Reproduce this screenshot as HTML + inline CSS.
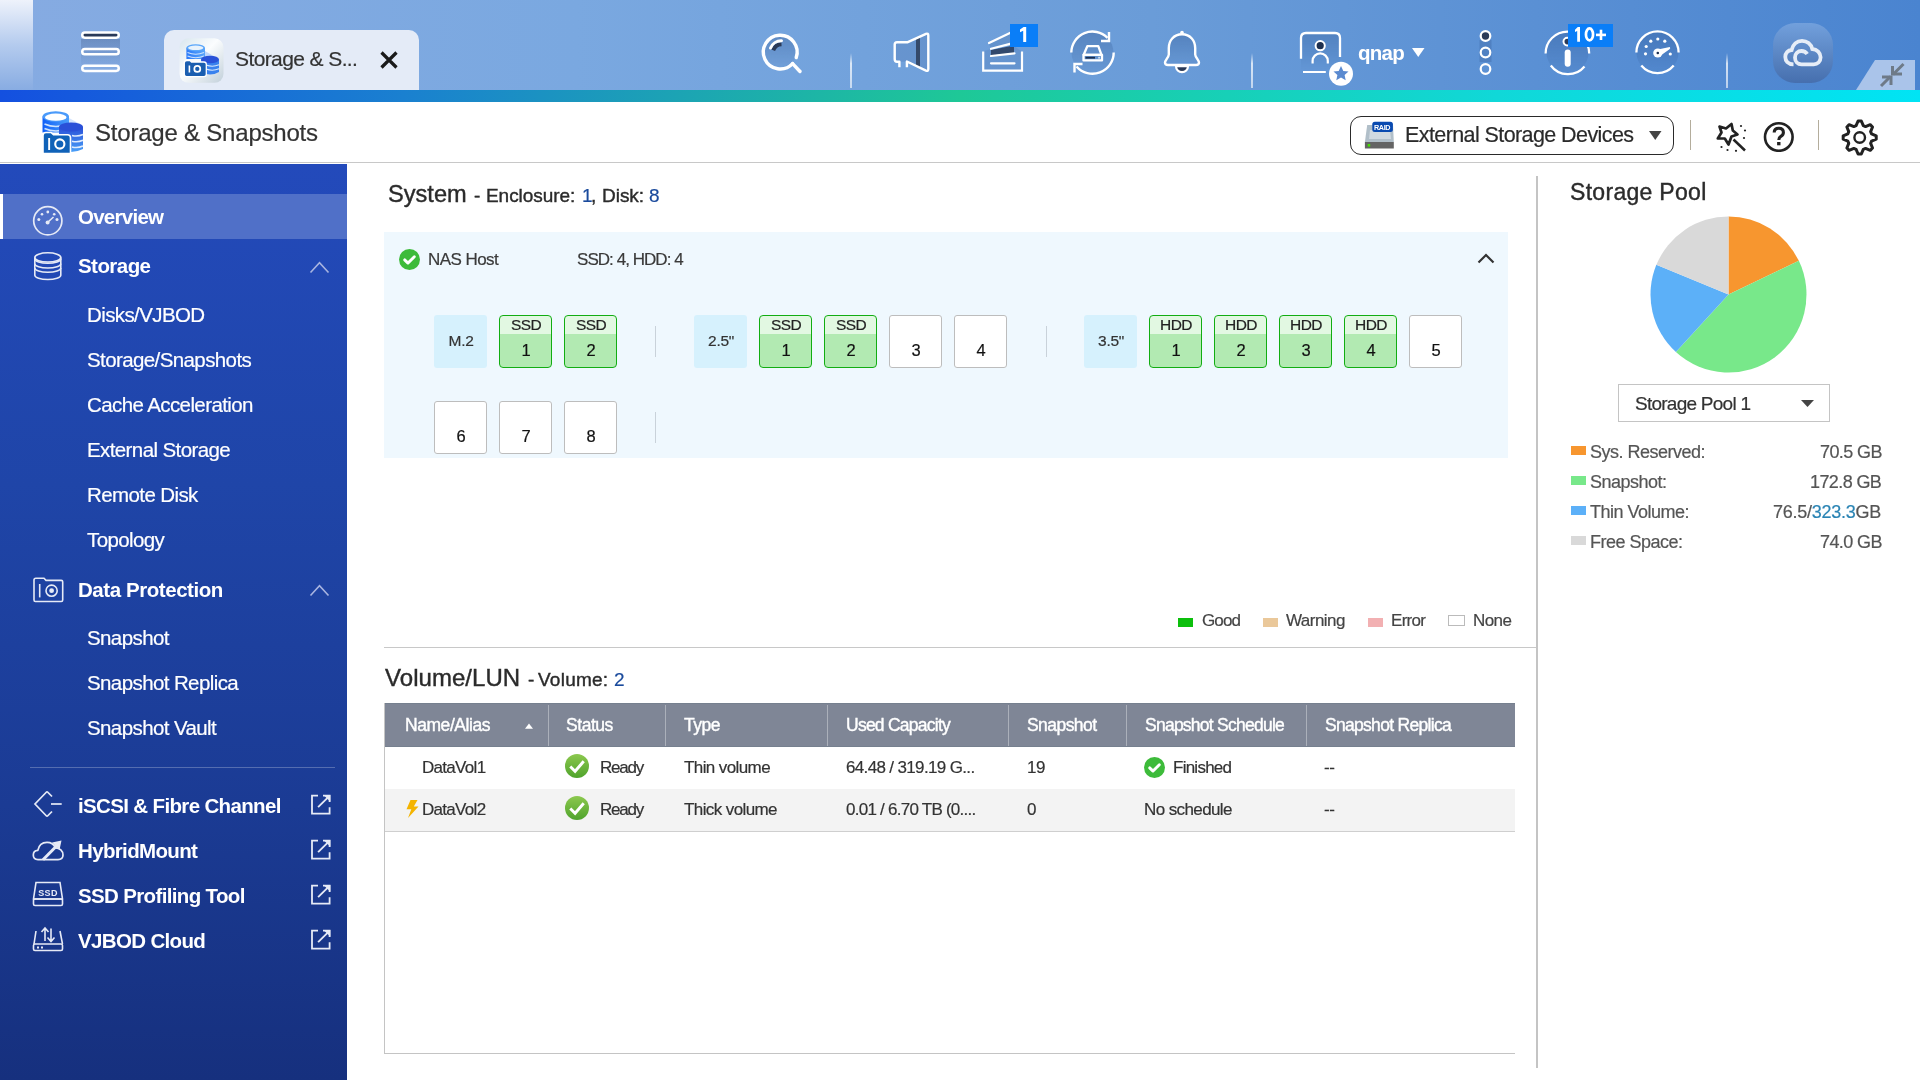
<!DOCTYPE html>
<html><head><meta charset="utf-8"><style>
html,body{margin:0;padding:0;width:1920px;height:1080px;overflow:hidden;background:#fff;font-family:"Liberation Sans",sans-serif;}
body{position:relative;}
body>div{will-change:transform;}
</style></head><body>
<div style="position:absolute;left:0px;top:0px;width:1920px;height:90px;background:linear-gradient(90deg,#86abe2 0%,#7aa8e0 30%,#6a9cd8 60%,#4a84d0 100%);"></div>
<div style="position:absolute;left:0px;top:0px;width:33px;height:90px;background:linear-gradient(180deg,#eef2fb 0%,#b4cbee 50%,#88ace2 100%);"></div>
<div style="position:absolute;left:0px;top:90px;width:1920px;height:12px;background:linear-gradient(90deg,#1450e0 0%,#1a80d0 21%,#1ec897 50%,#10d8d8 78%,#00e4f4 100%);"></div>
<div style="position:absolute;left:0px;top:102px;width:1920px;height:60px;background:#fff;"></div>
<div style="position:absolute;left:0px;top:162px;width:1920px;height:1px;background:#c8c8c8;"></div>
<div style="position:absolute;left:0px;top:164px;width:347px;height:916px;background:linear-gradient(180deg,#234abb 0%,#1f45a8 35%,#1b3b94 70%,#16307e 100%);"></div>
<div style="position:absolute;left:0px;top:194px;width:347px;height:45px;background:#5070c8;"></div>
<div style="position:absolute;left:0px;top:194px;width:3px;height:45px;background:#fff;"></div>
<div style="position:absolute;left:384px;top:232px;width:1124px;height:226px;background:#eff8fe;"></div>
<div style="position:absolute;left:384px;top:647px;width:1152px;height:1px;background:#c8c8c8;"></div>
<div style="position:absolute;left:1536px;top:176px;width:2px;height:892px;background:#c4c4c4;"></div>
<div style="position:absolute;left:164px;top:30px;width:255px;height:60px;background:#e4ebf7;border-radius:10px 10px 0 0;"></div>
<div style="position:absolute;left:235px;top:48.22px;font-size:21px;line-height:21px;color:#333;font-weight:400;letter-spacing:-0.6px;white-space:nowrap;-webkit-text-stroke:0.2px currentColor;">Storage &amp; S...</div>
<div style="position:absolute;left:95px;top:120.68px;font-size:24px;line-height:24px;color:#333;font-weight:400;letter-spacing:-0.21px;white-space:nowrap;-webkit-text-stroke:0.2px currentColor;">Storage &amp; Snapshots</div>
<div style="position:absolute;left:78px;top:206.65px;font-size:20.5px;line-height:20.5px;color:#ffffff;font-weight:700;letter-spacing:-0.74px;white-space:nowrap;">Overview</div>
<div style="position:absolute;left:78px;top:255.65px;font-size:20.5px;line-height:20.5px;color:#ffffff;font-weight:700;letter-spacing:-0.55px;white-space:nowrap;">Storage</div>
<div style="position:absolute;left:87px;top:305.15px;font-size:20.5px;line-height:20.5px;color:#ffffff;font-weight:400;letter-spacing:-0.6px;white-space:nowrap;-webkit-text-stroke:0.2px currentColor;">Disks/VJBOD</div>
<div style="position:absolute;left:87px;top:350.15px;font-size:20.5px;line-height:20.5px;color:#ffffff;font-weight:400;letter-spacing:-0.6px;white-space:nowrap;-webkit-text-stroke:0.2px currentColor;">Storage/Snapshots</div>
<div style="position:absolute;left:87px;top:395.15px;font-size:20.5px;line-height:20.5px;color:#ffffff;font-weight:400;letter-spacing:-0.6px;white-space:nowrap;-webkit-text-stroke:0.2px currentColor;">Cache Acceleration</div>
<div style="position:absolute;left:87px;top:440.15px;font-size:20.5px;line-height:20.5px;color:#ffffff;font-weight:400;letter-spacing:-0.6px;white-space:nowrap;-webkit-text-stroke:0.2px currentColor;">External Storage</div>
<div style="position:absolute;left:87px;top:485.15px;font-size:20.5px;line-height:20.5px;color:#ffffff;font-weight:400;letter-spacing:-0.6px;white-space:nowrap;-webkit-text-stroke:0.2px currentColor;">Remote Disk</div>
<div style="position:absolute;left:87px;top:530.15px;font-size:20.5px;line-height:20.5px;color:#ffffff;font-weight:400;letter-spacing:-0.6px;white-space:nowrap;-webkit-text-stroke:0.2px currentColor;">Topology</div>
<div style="position:absolute;left:78px;top:579.65px;font-size:20.5px;line-height:20.5px;color:#ffffff;font-weight:700;letter-spacing:-0.44px;white-space:nowrap;">Data Protection</div>
<div style="position:absolute;left:87px;top:628.25px;font-size:20.5px;line-height:20.5px;color:#ffffff;font-weight:400;letter-spacing:-0.6px;white-space:nowrap;-webkit-text-stroke:0.2px currentColor;">Snapshot</div>
<div style="position:absolute;left:87px;top:673.25px;font-size:20.5px;line-height:20.5px;color:#ffffff;font-weight:400;letter-spacing:-0.6px;white-space:nowrap;-webkit-text-stroke:0.2px currentColor;">Snapshot Replica</div>
<div style="position:absolute;left:87px;top:718.25px;font-size:20.5px;line-height:20.5px;color:#ffffff;font-weight:400;letter-spacing:-0.6px;white-space:nowrap;-webkit-text-stroke:0.2px currentColor;">Snapshot Vault</div>
<div style="position:absolute;left:30px;top:767px;width:305px;height:1px;background:rgba(255,255,255,0.25);"></div>
<div style="position:absolute;left:78px;top:795.65px;font-size:20.5px;line-height:20.5px;color:#ffffff;font-weight:700;letter-spacing:-0.65px;white-space:nowrap;">iSCSI &amp; Fibre Channel</div>
<div style="position:absolute;left:78px;top:840.65px;font-size:20.5px;line-height:20.5px;color:#ffffff;font-weight:700;letter-spacing:-0.65px;white-space:nowrap;">HybridMount</div>
<div style="position:absolute;left:78px;top:885.65px;font-size:20.5px;line-height:20.5px;color:#ffffff;font-weight:700;letter-spacing:-0.65px;white-space:nowrap;">SSD Profiling Tool</div>
<div style="position:absolute;left:78px;top:930.65px;font-size:20.5px;line-height:20.5px;color:#ffffff;font-weight:700;letter-spacing:-0.65px;white-space:nowrap;">VJBOD Cloud</div>
<div style="position:absolute;left:387.5px;top:183.22px;font-size:23.6px;line-height:23.6px;color:#2b2b2b;font-weight:400;letter-spacing:0px;white-space:nowrap;-webkit-text-stroke:0.4px currentColor;">System</div>
<div style="position:absolute;left:473.5px;top:186.22px;font-size:19px;line-height:19px;color:#2b2b2b;font-weight:400;letter-spacing:0px;white-space:nowrap;-webkit-text-stroke:0.4px currentColor;">-</div>
<div style="position:absolute;left:486px;top:186.22px;font-size:19px;line-height:19px;color:#2b2b2b;font-weight:400;letter-spacing:-0.05px;white-space:nowrap;-webkit-text-stroke:0.4px currentColor;">Enclosure:</div>
<div style="position:absolute;left:581.5px;top:186.22px;font-size:19px;line-height:19px;color:#1a4a9c;font-weight:400;letter-spacing:0px;white-space:nowrap;-webkit-text-stroke:0.2px currentColor;">1</div>
<div style="position:absolute;left:590.5px;top:186.22px;font-size:19px;line-height:19px;color:#2b2b2b;font-weight:400;letter-spacing:0px;white-space:nowrap;-webkit-text-stroke:0.4px currentColor;">,</div>
<div style="position:absolute;left:602px;top:186.22px;font-size:19px;line-height:19px;color:#2b2b2b;font-weight:400;letter-spacing:-0.03px;white-space:nowrap;-webkit-text-stroke:0.4px currentColor;">Disk:</div>
<div style="position:absolute;left:648.5px;top:186.22px;font-size:19px;line-height:19px;color:#1a4a9c;font-weight:400;letter-spacing:0px;white-space:nowrap;-webkit-text-stroke:0.2px currentColor;">8</div>
<div style="position:absolute;left:428px;top:250.91px;font-size:17px;line-height:17px;color:#3a3a3a;font-weight:400;letter-spacing:-0.55px;white-space:nowrap;-webkit-text-stroke:0.2px currentColor;">NAS Host</div>
<div style="position:absolute;left:576.6px;top:250.91px;font-size:17px;line-height:17px;color:#3a3a3a;font-weight:400;letter-spacing:-0.95px;white-space:nowrap;-webkit-text-stroke:0.2px currentColor;">SSD: 4, HDD: 4</div>
<div style="position:absolute;left:1178px;top:618px;width:15px;height:9px;background:#0cbf0c;"></div>
<div style="position:absolute;left:1201.5px;top:612.11px;font-size:17px;line-height:17px;color:#444;font-weight:400;letter-spacing:-0.9px;white-space:nowrap;-webkit-text-stroke:0.2px currentColor;">Good</div>
<div style="position:absolute;left:1263px;top:618px;width:15px;height:9px;background:#eac89a;"></div>
<div style="position:absolute;left:1285.8px;top:612.11px;font-size:17px;line-height:17px;color:#444;font-weight:400;letter-spacing:-0.55px;white-space:nowrap;-webkit-text-stroke:0.2px currentColor;">Warning</div>
<div style="position:absolute;left:1368px;top:618px;width:15px;height:9px;background:#f2b0b2;"></div>
<div style="position:absolute;left:1391px;top:612.11px;font-size:17px;line-height:17px;color:#444;font-weight:400;letter-spacing:-0.7px;white-space:nowrap;-webkit-text-stroke:0.2px currentColor;">Error</div>
<div style="position:absolute;left:1448px;top:615px;width:17px;height:11px;background:#fff;border:1px solid #bbb;box-sizing:border-box;"></div>
<div style="position:absolute;left:1473px;top:612.11px;font-size:17px;line-height:17px;color:#444;font-weight:400;letter-spacing:-0.6px;white-space:nowrap;-webkit-text-stroke:0.2px currentColor;">None</div>
<div style="position:absolute;left:384.7px;top:666.08px;font-size:24px;line-height:24px;color:#2b2b2b;font-weight:400;letter-spacing:0.05px;white-space:nowrap;-webkit-text-stroke:0.4px currentColor;">Volume/LUN</div>
<div style="position:absolute;left:527.5px;top:669.62px;font-size:19px;line-height:19px;color:#2b2b2b;font-weight:400;letter-spacing:0px;white-space:nowrap;-webkit-text-stroke:0.4px currentColor;">-</div>
<div style="position:absolute;left:538.4px;top:669.62px;font-size:19px;line-height:19px;color:#2b2b2b;font-weight:400;letter-spacing:0.25px;white-space:nowrap;-webkit-text-stroke:0.4px currentColor;">Volume:</div>
<div style="position:absolute;left:614px;top:669.62px;font-size:19px;line-height:19px;color:#1a4a9c;font-weight:400;letter-spacing:0px;white-space:nowrap;-webkit-text-stroke:0.2px currentColor;">2</div>
<div style="position:absolute;left:385px;top:703px;width:1130px;height:44px;background:#7f8696;border-top:1px solid #76808f;border-bottom:1px solid #76808f;box-sizing:border-box;"></div>
<div style="position:absolute;left:548px;top:705px;width:1px;height:41px;background:rgba(255,255,255,0.35);"></div>
<div style="position:absolute;left:665px;top:705px;width:1px;height:41px;background:rgba(255,255,255,0.35);"></div>
<div style="position:absolute;left:827px;top:705px;width:1px;height:41px;background:rgba(255,255,255,0.35);"></div>
<div style="position:absolute;left:1008px;top:705px;width:1px;height:41px;background:rgba(255,255,255,0.35);"></div>
<div style="position:absolute;left:1126px;top:705px;width:1px;height:41px;background:rgba(255,255,255,0.35);"></div>
<div style="position:absolute;left:1306px;top:705px;width:1px;height:41px;background:rgba(255,255,255,0.35);"></div>
<div style="position:absolute;left:404.5px;top:717.19px;font-size:17.5px;line-height:17.5px;color:#ffffff;font-weight:400;letter-spacing:-0.45px;white-space:nowrap;-webkit-text-stroke:0.4px currentColor;">Name/Alias</div>
<svg style="position:absolute;left:524px;top:722px;" width="10" height="8" viewBox="0 0 10 8"><path d="M1 6.8 L5 1.5 L9 6.8 Z" fill="#fff"/></svg>
<div style="position:absolute;left:566.2px;top:717.19px;font-size:17.5px;line-height:17.5px;color:#ffffff;font-weight:400;letter-spacing:-0.45px;white-space:nowrap;-webkit-text-stroke:0.4px currentColor;">Status</div>
<div style="position:absolute;left:684.3px;top:717.19px;font-size:17.5px;line-height:17.5px;color:#ffffff;font-weight:400;letter-spacing:-0.45px;white-space:nowrap;-webkit-text-stroke:0.4px currentColor;">Type</div>
<div style="position:absolute;left:846.4px;top:717.19px;font-size:17.5px;line-height:17.5px;color:#ffffff;font-weight:400;letter-spacing:-0.75px;white-space:nowrap;-webkit-text-stroke:0.4px currentColor;">Used Capacity</div>
<div style="position:absolute;left:1026.7px;top:717.19px;font-size:17.5px;line-height:17.5px;color:#ffffff;font-weight:400;letter-spacing:-0.55px;white-space:nowrap;-webkit-text-stroke:0.4px currentColor;">Snapshot</div>
<div style="position:absolute;left:1144.7px;top:717.19px;font-size:17.5px;line-height:17.5px;color:#ffffff;font-weight:400;letter-spacing:-0.75px;white-space:nowrap;-webkit-text-stroke:0.4px currentColor;">Snapshot Schedule</div>
<div style="position:absolute;left:1324.7px;top:717.19px;font-size:17.5px;line-height:17.5px;color:#ffffff;font-weight:400;letter-spacing:-0.7px;white-space:nowrap;-webkit-text-stroke:0.4px currentColor;">Snapshot Replica</div>
<div style="position:absolute;left:384px;top:747px;width:1131px;height:42px;background:#fff;"></div>
<div style="position:absolute;left:384px;top:789px;width:1131px;height:42px;background:#f3f3f3;"></div>
<div style="position:absolute;left:384px;top:831px;width:1131px;height:1px;background:#cfcfcf;"></div>
<div style="position:absolute;left:384px;top:703px;width:1px;height:350px;background:#c4c4c4;"></div>
<div style="position:absolute;left:384px;top:1053px;width:1131px;height:1px;background:#c4c4c4;"></div>
<div style="position:absolute;left:421.5px;top:758.51px;font-size:17px;line-height:17px;color:#333;font-weight:400;letter-spacing:-0.7px;white-space:nowrap;-webkit-text-stroke:0.2px currentColor;">DataVol1</div>
<div style="position:absolute;left:600.3px;top:758.51px;font-size:17px;line-height:17px;color:#333;font-weight:400;letter-spacing:-1.2px;white-space:nowrap;-webkit-text-stroke:0.2px currentColor;">Ready</div>
<div style="position:absolute;left:684px;top:758.51px;font-size:17px;line-height:17px;color:#333;font-weight:400;letter-spacing:-0.6px;white-space:nowrap;-webkit-text-stroke:0.2px currentColor;">Thin volume</div>
<div style="position:absolute;left:846px;top:758.51px;font-size:17px;line-height:17px;color:#333;font-weight:400;letter-spacing:-0.65px;white-space:nowrap;-webkit-text-stroke:0.2px currentColor;">64.48 / 319.19 G...</div>
<div style="position:absolute;left:1026.7px;top:758.51px;font-size:17px;line-height:17px;color:#333;font-weight:400;letter-spacing:-0.5px;white-space:nowrap;-webkit-text-stroke:0.2px currentColor;">19</div>
<div style="position:absolute;left:1172.8px;top:758.51px;font-size:17px;line-height:17px;color:#333;font-weight:400;letter-spacing:-0.75px;white-space:nowrap;-webkit-text-stroke:0.2px currentColor;">Finished</div>
<div style="position:absolute;left:1324.4px;top:758.51px;font-size:17px;line-height:17px;color:#333;font-weight:400;letter-spacing:-0.5px;white-space:nowrap;-webkit-text-stroke:0.2px currentColor;">--</div>
<div style="position:absolute;left:421.5px;top:800.51px;font-size:17px;line-height:17px;color:#333;font-weight:400;letter-spacing:-0.7px;white-space:nowrap;-webkit-text-stroke:0.2px currentColor;">DataVol2</div>
<div style="position:absolute;left:600.3px;top:800.51px;font-size:17px;line-height:17px;color:#333;font-weight:400;letter-spacing:-1.2px;white-space:nowrap;-webkit-text-stroke:0.2px currentColor;">Ready</div>
<div style="position:absolute;left:684px;top:800.51px;font-size:17px;line-height:17px;color:#333;font-weight:400;letter-spacing:-0.6px;white-space:nowrap;-webkit-text-stroke:0.2px currentColor;">Thick volume</div>
<div style="position:absolute;left:846px;top:800.51px;font-size:17px;line-height:17px;color:#333;font-weight:400;letter-spacing:-0.75px;white-space:nowrap;-webkit-text-stroke:0.2px currentColor;">0.01 / 6.70 TB (0....</div>
<div style="position:absolute;left:1026.7px;top:800.51px;font-size:17px;line-height:17px;color:#333;font-weight:400;letter-spacing:-0.5px;white-space:nowrap;-webkit-text-stroke:0.2px currentColor;">0</div>
<div style="position:absolute;left:1144px;top:800.51px;font-size:17px;line-height:17px;color:#333;font-weight:400;letter-spacing:-0.6px;white-space:nowrap;-webkit-text-stroke:0.2px currentColor;">No schedule</div>
<div style="position:absolute;left:1324.4px;top:800.51px;font-size:17px;line-height:17px;color:#333;font-weight:400;letter-spacing:-0.5px;white-space:nowrap;-webkit-text-stroke:0.2px currentColor;">--</div>
<div style="position:absolute;left:1569.6px;top:181.13px;font-size:23px;line-height:23px;color:#2b2b2b;font-weight:400;letter-spacing:0.3px;white-space:nowrap;-webkit-text-stroke:0.4px currentColor;">Storage Pool</div>
<div style="position:absolute;left:1618px;top:384px;width:212px;height:38px;border:1px solid #c4c4c4;box-sizing:border-box;background:#fff;"></div>
<div style="position:absolute;left:1635px;top:393.52px;font-size:19px;line-height:19px;color:#333;font-weight:400;letter-spacing:-0.75px;white-space:nowrap;-webkit-text-stroke:0.2px currentColor;">Storage Pool 1</div>
<svg style="position:absolute;left:1801px;top:400px;" width="13" height="7" viewBox="0 0 13 7"><path d="M0 0 L13 0 L6.5 7 Z" fill="#444"/></svg>
<div style="position:absolute;left:1571px;top:446px;width:15px;height:9px;background:#f7962f;"></div>
<div style="position:absolute;left:1590px;top:442.76px;font-size:18px;line-height:18px;color:#555;font-weight:400;letter-spacing:-0.5px;white-space:nowrap;-webkit-text-stroke:0.2px currentColor;">Sys. Reserved:</div>
<div style="position:absolute;right:38.5px;top:442.76px;font-size:18px;line-height:18px;color:#555;font-weight:400;letter-spacing:-0.6px;white-space:nowrap;-webkit-text-stroke:0.2px currentColor;">70.5 GB</div>
<div style="position:absolute;left:1571px;top:476px;width:15px;height:9px;background:#78e88a;"></div>
<div style="position:absolute;left:1590px;top:472.76px;font-size:18px;line-height:18px;color:#555;font-weight:400;letter-spacing:-0.5px;white-space:nowrap;-webkit-text-stroke:0.2px currentColor;">Snapshot:</div>
<div style="position:absolute;right:38.5px;top:472.76px;font-size:18px;line-height:18px;color:#555;font-weight:400;letter-spacing:-0.6px;white-space:nowrap;-webkit-text-stroke:0.2px currentColor;">172.8 GB</div>
<div style="position:absolute;left:1571px;top:506px;width:15px;height:9px;background:#5cb0f8;"></div>
<div style="position:absolute;left:1590px;top:502.76px;font-size:18px;line-height:18px;color:#555;font-weight:400;letter-spacing:-0.5px;white-space:nowrap;-webkit-text-stroke:0.2px currentColor;">Thin Volume:</div>
<div style="position:absolute;right:38.5px;top:502.76px;font-size:18px;line-height:18px;color:#555;font-weight:400;letter-spacing:-0.25px;white-space:nowrap;-webkit-text-stroke:0.2px currentColor;">76.5/<span style="color:#2a84b4">323.3</span>GB</div>
<div style="position:absolute;left:1571px;top:536px;width:15px;height:9px;background:#d9d9d9;"></div>
<div style="position:absolute;left:1590px;top:532.76px;font-size:18px;line-height:18px;color:#555;font-weight:400;letter-spacing:-0.5px;white-space:nowrap;-webkit-text-stroke:0.2px currentColor;">Free Space:</div>
<div style="position:absolute;right:38.5px;top:532.76px;font-size:18px;line-height:18px;color:#555;font-weight:400;letter-spacing:-0.6px;white-space:nowrap;-webkit-text-stroke:0.2px currentColor;">74.0 GB</div>
<div style="position:absolute;left:434px;top:315px;width:53px;height:53px;background:#d6f1fd;border-radius:3px;"></div>
<div style="position:absolute;left:-39.5px;width:1000px;text-align:center;top:332.88px;font-size:15.5px;line-height:15.5px;color:#333;font-weight:400;letter-spacing:-0.3px;white-space:nowrap;-webkit-text-stroke:0.2px currentColor;">M.2</div>
<div style="position:absolute;left:499px;top:315px;width:53px;height:53px;box-sizing:border-box;border:1.8px solid #12ad12;border-radius:4px;background:linear-gradient(180deg,#e2f8e2 0,#e2f8e2 18px,#b2eab2 18px);"></div>
<div style="position:absolute;left:25.5px;width:1000px;text-align:center;top:317.48px;font-size:15.5px;line-height:15.5px;color:#222;font-weight:400;letter-spacing:-0.6px;white-space:nowrap;-webkit-text-stroke:0.2px currentColor;">SSD</div>
<div style="position:absolute;left:25.5px;width:1000px;text-align:center;top:341.73px;font-size:16.5px;line-height:16.5px;color:#111;font-weight:400;letter-spacing:0px;white-space:nowrap;-webkit-text-stroke:0.2px currentColor;">1</div>
<div style="position:absolute;left:564px;top:315px;width:53px;height:53px;box-sizing:border-box;border:1.8px solid #12ad12;border-radius:4px;background:linear-gradient(180deg,#e2f8e2 0,#e2f8e2 18px,#b2eab2 18px);"></div>
<div style="position:absolute;left:90.5px;width:1000px;text-align:center;top:317.48px;font-size:15.5px;line-height:15.5px;color:#222;font-weight:400;letter-spacing:-0.6px;white-space:nowrap;-webkit-text-stroke:0.2px currentColor;">SSD</div>
<div style="position:absolute;left:90.5px;width:1000px;text-align:center;top:341.73px;font-size:16.5px;line-height:16.5px;color:#111;font-weight:400;letter-spacing:0px;white-space:nowrap;-webkit-text-stroke:0.2px currentColor;">2</div>
<div style="position:absolute;left:655px;top:326px;width:1px;height:31px;background:#c9d2da;"></div>
<div style="position:absolute;left:694px;top:315px;width:53px;height:53px;background:#d6f1fd;border-radius:3px;"></div>
<div style="position:absolute;left:220.5px;width:1000px;text-align:center;top:332.88px;font-size:15.5px;line-height:15.5px;color:#333;font-weight:400;letter-spacing:-0.3px;white-space:nowrap;-webkit-text-stroke:0.2px currentColor;">2.5"</div>
<div style="position:absolute;left:759px;top:315px;width:53px;height:53px;box-sizing:border-box;border:1.8px solid #12ad12;border-radius:4px;background:linear-gradient(180deg,#e2f8e2 0,#e2f8e2 18px,#b2eab2 18px);"></div>
<div style="position:absolute;left:285.5px;width:1000px;text-align:center;top:317.48px;font-size:15.5px;line-height:15.5px;color:#222;font-weight:400;letter-spacing:-0.6px;white-space:nowrap;-webkit-text-stroke:0.2px currentColor;">SSD</div>
<div style="position:absolute;left:285.5px;width:1000px;text-align:center;top:341.73px;font-size:16.5px;line-height:16.5px;color:#111;font-weight:400;letter-spacing:0px;white-space:nowrap;-webkit-text-stroke:0.2px currentColor;">1</div>
<div style="position:absolute;left:824px;top:315px;width:53px;height:53px;box-sizing:border-box;border:1.8px solid #12ad12;border-radius:4px;background:linear-gradient(180deg,#e2f8e2 0,#e2f8e2 18px,#b2eab2 18px);"></div>
<div style="position:absolute;left:350.5px;width:1000px;text-align:center;top:317.48px;font-size:15.5px;line-height:15.5px;color:#222;font-weight:400;letter-spacing:-0.6px;white-space:nowrap;-webkit-text-stroke:0.2px currentColor;">SSD</div>
<div style="position:absolute;left:350.5px;width:1000px;text-align:center;top:341.73px;font-size:16.5px;line-height:16.5px;color:#111;font-weight:400;letter-spacing:0px;white-space:nowrap;-webkit-text-stroke:0.2px currentColor;">2</div>
<div style="position:absolute;left:889px;top:315px;width:53px;height:53px;box-sizing:border-box;border:1px solid #bdbdbd;border-radius:3px;background:#fff;"></div>
<div style="position:absolute;left:415.5px;width:1000px;text-align:center;top:341.73px;font-size:16.5px;line-height:16.5px;color:#111;font-weight:400;letter-spacing:0px;white-space:nowrap;-webkit-text-stroke:0.2px currentColor;">3</div>
<div style="position:absolute;left:954px;top:315px;width:53px;height:53px;box-sizing:border-box;border:1px solid #bdbdbd;border-radius:3px;background:#fff;"></div>
<div style="position:absolute;left:480.5px;width:1000px;text-align:center;top:341.73px;font-size:16.5px;line-height:16.5px;color:#111;font-weight:400;letter-spacing:0px;white-space:nowrap;-webkit-text-stroke:0.2px currentColor;">4</div>
<div style="position:absolute;left:1046px;top:326px;width:1px;height:31px;background:#c9d2da;"></div>
<div style="position:absolute;left:1084px;top:315px;width:53px;height:53px;background:#d6f1fd;border-radius:3px;"></div>
<div style="position:absolute;left:610.5px;width:1000px;text-align:center;top:332.88px;font-size:15.5px;line-height:15.5px;color:#333;font-weight:400;letter-spacing:-0.3px;white-space:nowrap;-webkit-text-stroke:0.2px currentColor;">3.5"</div>
<div style="position:absolute;left:1149px;top:315px;width:53px;height:53px;box-sizing:border-box;border:1.8px solid #12ad12;border-radius:4px;background:linear-gradient(180deg,#e2f8e2 0,#e2f8e2 18px,#b2eab2 18px);"></div>
<div style="position:absolute;left:675.5px;width:1000px;text-align:center;top:317.48px;font-size:15.5px;line-height:15.5px;color:#222;font-weight:400;letter-spacing:-0.6px;white-space:nowrap;-webkit-text-stroke:0.2px currentColor;">HDD</div>
<div style="position:absolute;left:675.5px;width:1000px;text-align:center;top:341.73px;font-size:16.5px;line-height:16.5px;color:#111;font-weight:400;letter-spacing:0px;white-space:nowrap;-webkit-text-stroke:0.2px currentColor;">1</div>
<div style="position:absolute;left:1214px;top:315px;width:53px;height:53px;box-sizing:border-box;border:1.8px solid #12ad12;border-radius:4px;background:linear-gradient(180deg,#e2f8e2 0,#e2f8e2 18px,#b2eab2 18px);"></div>
<div style="position:absolute;left:740.5px;width:1000px;text-align:center;top:317.48px;font-size:15.5px;line-height:15.5px;color:#222;font-weight:400;letter-spacing:-0.6px;white-space:nowrap;-webkit-text-stroke:0.2px currentColor;">HDD</div>
<div style="position:absolute;left:740.5px;width:1000px;text-align:center;top:341.73px;font-size:16.5px;line-height:16.5px;color:#111;font-weight:400;letter-spacing:0px;white-space:nowrap;-webkit-text-stroke:0.2px currentColor;">2</div>
<div style="position:absolute;left:1279px;top:315px;width:53px;height:53px;box-sizing:border-box;border:1.8px solid #12ad12;border-radius:4px;background:linear-gradient(180deg,#e2f8e2 0,#e2f8e2 18px,#b2eab2 18px);"></div>
<div style="position:absolute;left:805.5px;width:1000px;text-align:center;top:317.48px;font-size:15.5px;line-height:15.5px;color:#222;font-weight:400;letter-spacing:-0.6px;white-space:nowrap;-webkit-text-stroke:0.2px currentColor;">HDD</div>
<div style="position:absolute;left:805.5px;width:1000px;text-align:center;top:341.73px;font-size:16.5px;line-height:16.5px;color:#111;font-weight:400;letter-spacing:0px;white-space:nowrap;-webkit-text-stroke:0.2px currentColor;">3</div>
<div style="position:absolute;left:1344px;top:315px;width:53px;height:53px;box-sizing:border-box;border:1.8px solid #12ad12;border-radius:4px;background:linear-gradient(180deg,#e2f8e2 0,#e2f8e2 18px,#b2eab2 18px);"></div>
<div style="position:absolute;left:870.5px;width:1000px;text-align:center;top:317.48px;font-size:15.5px;line-height:15.5px;color:#222;font-weight:400;letter-spacing:-0.6px;white-space:nowrap;-webkit-text-stroke:0.2px currentColor;">HDD</div>
<div style="position:absolute;left:870.5px;width:1000px;text-align:center;top:341.73px;font-size:16.5px;line-height:16.5px;color:#111;font-weight:400;letter-spacing:0px;white-space:nowrap;-webkit-text-stroke:0.2px currentColor;">4</div>
<div style="position:absolute;left:1409px;top:315px;width:53px;height:53px;box-sizing:border-box;border:1px solid #bdbdbd;border-radius:3px;background:#fff;"></div>
<div style="position:absolute;left:935.5px;width:1000px;text-align:center;top:341.73px;font-size:16.5px;line-height:16.5px;color:#111;font-weight:400;letter-spacing:0px;white-space:nowrap;-webkit-text-stroke:0.2px currentColor;">5</div>
<div style="position:absolute;left:434px;top:401px;width:53px;height:53px;box-sizing:border-box;border:1px solid #bdbdbd;border-radius:3px;background:#fff;"></div>
<div style="position:absolute;left:-39.5px;width:1000px;text-align:center;top:427.73px;font-size:16.5px;line-height:16.5px;color:#111;font-weight:400;letter-spacing:0px;white-space:nowrap;-webkit-text-stroke:0.2px currentColor;">6</div>
<div style="position:absolute;left:499px;top:401px;width:53px;height:53px;box-sizing:border-box;border:1px solid #bdbdbd;border-radius:3px;background:#fff;"></div>
<div style="position:absolute;left:25.5px;width:1000px;text-align:center;top:427.73px;font-size:16.5px;line-height:16.5px;color:#111;font-weight:400;letter-spacing:0px;white-space:nowrap;-webkit-text-stroke:0.2px currentColor;">7</div>
<div style="position:absolute;left:564px;top:401px;width:53px;height:53px;box-sizing:border-box;border:1px solid #bdbdbd;border-radius:3px;background:#fff;"></div>
<div style="position:absolute;left:90.5px;width:1000px;text-align:center;top:427.73px;font-size:16.5px;line-height:16.5px;color:#111;font-weight:400;letter-spacing:0px;white-space:nowrap;-webkit-text-stroke:0.2px currentColor;">8</div>
<div style="position:absolute;left:655px;top:412px;width:1px;height:31px;background:#c9d2da;"></div>
<svg style="position:absolute;left:1650px;top:216px;" width="157" height="157" viewBox="0 0 157 157"><path d="M78.5 78.5 L78.50 0.50 A78 78 0 0 1 148.87 44.86 Z" fill="#f7962f"/><path d="M78.5 78.5 L148.87 44.86 A78 78 0 0 1 25.89 136.08 Z" fill="#78e88a"/><path d="M78.5 78.5 L25.89 136.08 A78 78 0 0 1 6.36 48.84 Z" fill="#5cb0f8"/><path d="M78.5 78.5 L6.36 48.84 A78 78 0 0 1 78.50 0.50 Z" fill="#d9d9d9"/></svg>
<svg style="position:absolute;left:78px;top:28px;" width="46" height="48" viewBox="0 0 46 48">
<defs><linearGradient id="hg" x1="0" y1="0" x2="0" y2="1"><stop offset="0" stop-color="#1a2a50" stop-opacity="0.22"/><stop offset="1" stop-color="#1a2a50" stop-opacity="0.03"/></linearGradient></defs>
<rect x="3" y="11" width="39" height="25" fill="url(#hg)"/>
<rect x="4.25" y="4.5" width="36.5" height="5.2" rx="2.6" fill="#2a3a58" stroke="#fff" stroke-width="2.5"/>
<rect x="4.25" y="21.1" width="36.5" height="5.2" rx="2.6" fill="none" stroke="#fff" stroke-width="2.5"/>
<rect x="4.25" y="37.7" width="36.5" height="5.2" rx="2.6" fill="none" stroke="#fff" stroke-width="2.5"/>
</svg>
<div style="position:absolute;left:850px;top:53px;width:2px;height:35px;background:linear-gradient(180deg,rgba(255,255,255,0) 0%,rgba(255,255,255,0.75) 30%,rgba(255,255,255,0.6) 100%);"></div>
<div style="position:absolute;left:1251px;top:53px;width:2px;height:35px;background:linear-gradient(180deg,rgba(255,255,255,0) 0%,rgba(255,255,255,0.75) 30%,rgba(255,255,255,0.6) 100%);"></div>
<div style="position:absolute;left:1726px;top:53px;width:2px;height:35px;background:linear-gradient(180deg,rgba(255,255,255,0) 0%,rgba(255,255,255,0.75) 30%,rgba(255,255,255,0.6) 100%);"></div>
<svg style="position:absolute;left:755px;top:25px;" width="60" height="60" viewBox="0 0 60 60">
<defs><linearGradient id="gq" x1="0" y1="0" x2="0" y2="1"><stop offset="0" stop-color="#1e3f78" stop-opacity="0.26"/><stop offset="1" stop-color="#1e3f78" stop-opacity="0.04"/></linearGradient></defs><circle cx="25.5" cy="26.5" r="16" fill="url(#gq)"/>
<path d="M41.2 32.6 A16.9 16.9 0 1 0 37.6 38.6" fill="none" stroke="#fff" stroke-width="3.4" stroke-linecap="round"/>
<path d="M37.6 38.6 L45 46.5" stroke="#fff" stroke-width="3.4" stroke-linecap="round"/>
<path d="M18.2 25.2 A9.2 9.2 0 0 1 26.5 19.3" fill="none" stroke="#2a3a58" stroke-width="4"/>
<path d="M15.5 23 A11.5 11.5 0 0 1 26.5 15.8" fill="none" stroke="#fff" stroke-width="3" stroke-linecap="round"/>
</svg>
<svg style="position:absolute;left:880px;top:20px;" width="60" height="60" viewBox="0 0 60 60">
<defs><clipPath id="mc"><path d="M14.7 24.5 Q14.7 22.2 17 22.2 L27.8 22.2 L46 13.8 Q48.3 13 48.3 15.5 L48.3 49 Q48.3 51.5 46 50.6 L26.9 41.5 L19.4 41.7 L17 41.7 Q14.7 41.7 14.7 39 Z"/></clipPath></defs>
<path d="M14.7 24.5 Q14.7 22.2 17 22.2 L27.8 22.2 L46 13.8 Q48.3 13 48.3 15.5 L48.3 49 Q48.3 51.5 46 50.6 L26.9 41.5 L19.4 41.7 L17 41.7 Q14.7 41.7 14.7 39 Z" fill="#2a4a80" fill-opacity="0.14"/>
<rect x="36" y="10" width="4" height="45" fill="#34496a" clip-path="url(#mc)"/>
<path d="M19.4 47.2 L19.4 41.7 L17 41.7 Q14.7 41.7 14.7 39 L14.7 24.5 Q14.7 22.2 17 22.2 L27.8 22.2 L46 13.8 Q48.3 13 48.3 15.5 L48.3 49 Q48.3 51.5 46 50.6 L26.9 41.5 L26.9 47.2" fill="none" stroke="#fff" stroke-width="2.4" stroke-linejoin="round"/>
</svg>
<svg style="position:absolute;left:975px;top:20px;" width="70" height="60" viewBox="0 0 70 60">
<path d="M14 24 L35 13.5 L35 24 L16 29 Z" fill="#2a4a80" fill-opacity="0.15"/>
<path d="M16 30 L39 25.5 L39 33 L16 35.5 Z" fill="#34496a"/>
<path d="M9 31 L16 29 L39 26 L46 31 L46 50 L9 50 Z" fill="#2a4a80" fill-opacity="0.12"/>
<path d="M8.2 31.5 L8.2 50.7 L47 50.7 L47 31.5" fill="none" stroke="#fff" stroke-width="2.2"/>
<path d="M16 43.3 L39.5 43.3" stroke="#fff" stroke-width="2.2" stroke-linecap="round"/>
<path d="M14 23 L36 12.5" stroke="#fff" stroke-width="2.2" stroke-linecap="round"/>
<path d="M16 28.8 L36 23.6" stroke="#fff" stroke-width="2.2" stroke-linecap="round"/>
<path d="M16 36 L39.5 33.3" stroke="#fff" stroke-width="2.2" stroke-linecap="round"/>
<rect x="35" y="4" width="28" height="23" fill="#0a7ef8"/>
</svg>
<svg style="position:absolute;left:1015px;top:24px;" width="16" height="20" viewBox="0 0 16 20"><path d="M5 5.6 L8.6 3 L11.2 3 L11.2 18 L8.2 18 L8.2 6.8 L5 8.3 Z" fill="#fff"/></svg>
<svg style="position:absolute;left:1062px;top:22px;" width="60" height="60" viewBox="0 0 60 60">
<defs><linearGradient id="gs" x1="0" y1="0" x2="0" y2="1"><stop offset="0" stop-color="#1e3f78" stop-opacity="0.26"/><stop offset="1" stop-color="#1e3f78" stop-opacity="0.04"/></linearGradient></defs><circle cx="30.5" cy="30.5" r="21" fill="url(#gs)"/>
<path d="M9.3 30.5 A21.2 21.2 0 0 1 45.5 15.8" fill="none" stroke="#fff" stroke-width="2.4"/>
<path d="M47 10 L47 19 L39 19" fill="none" stroke="#fff" stroke-width="2.4"/>
<path d="M51.7 30.5 A21.2 21.2 0 0 1 14.5 44.5" fill="none" stroke="#fff" stroke-width="2.4"/>
<path d="M12.5 50.5 L12.5 42 L20.5 42" fill="none" stroke="#fff" stroke-width="2.4"/>
<path d="M21.7 32.8 L25.3 24.2 L36.3 24.2 L39.5 32.8 Z" fill="none" stroke="#fff" stroke-width="2.3" stroke-linejoin="round"/>
<rect x="21.5" y="32.8" width="18.5" height="5.6" fill="none" stroke="#fff" stroke-width="2.3" stroke-linejoin="round"/>
<rect x="23.5" y="34.8" width="9.5" height="1.8" fill="#1a2e50"/><rect x="36.2" y="34.8" width="1.8" height="1.8" fill="#fff" fill-opacity="0.7"/>
</svg>
<svg style="position:absolute;left:1152px;top:22px;" width="60" height="60" viewBox="0 0 60 60">
<defs><linearGradient id="gb" x1="0" y1="0" x2="0" y2="1"><stop offset="0" stop-color="#1e3f78" stop-opacity="0.26"/><stop offset="1" stop-color="#1e3f78" stop-opacity="0.04"/></linearGradient></defs><path d="M30 12.3 C21.5 12.3 16.8 19 16.8 26 L16.8 32.5 C16.8 35 13 38.5 13 40.5 C13 42 14 43 16 43 L44 43 C46 43 47 42 47 40.5 C47 38.5 43.2 35 43.2 32.5 L43.2 26 C43.2 19 38.5 12.3 30 12.3 Z" fill="url(#gb)" stroke="#fff" stroke-width="2.4"/>
<path d="M24 44.2 A6 6 0 0 0 36 44.2 Z" fill="#2a3a58" stroke="#fff" stroke-width="2.2"/>
<circle cx="30" cy="10.5" r="1.8" fill="#fff"/>
</svg>
<svg style="position:absolute;left:1290px;top:22px;" width="70" height="70" viewBox="0 0 70 70">
<defs><linearGradient id="ug" x1="0" y1="0" x2="0" y2="1"><stop offset="0" stop-color="#1a3a70" stop-opacity="0.22"/><stop offset="1" stop-color="#1a3a70" stop-opacity="0"/></linearGradient></defs>
<rect x="11" y="11" width="39" height="38" fill="url(#ug)"/>
<path d="M11 36.7 L11 16 Q11 11 16 11 L45 11 Q50 11 50 16 L50 35" fill="none" stroke="#fff" stroke-width="2.3"/>
<path d="M13 50 L35.8 50" stroke="#fff" stroke-width="2"/>
<circle cx="30.2" cy="23.7" r="4.6" fill="#1e3050" stroke="#fff" stroke-width="2"/>
<path d="M22.6 41.6 L22.6 39 A7.6 7.6 0 0 1 37.8 39 L37.8 41.6" fill="none" stroke="#fff" stroke-width="2.2"/>
<circle cx="51" cy="51.8" r="12" fill="#fff"/>
<path d="M51 44 L53.3 48.9 L58.5 49.4 L54.6 52.9 L55.7 58.2 L51 55.5 L46.3 58.2 L47.4 52.9 L43.5 49.4 L48.7 48.9 Z" fill="#5a8ad0"/>
</svg>
<div style="position:absolute;left:1357.5px;top:42.55px;font-size:20.5px;line-height:20.5px;color:#fff;font-weight:700;letter-spacing:-0.75px;white-space:nowrap;">qnap</div>
<svg style="position:absolute;left:1412px;top:48px;" width="13" height="9" viewBox="0 0 13 9"><path d="M0 0 L12.5 0 L6.25 9 Z" fill="#fff"/></svg>
<svg style="position:absolute;left:1470px;top:20px;" width="32" height="64" viewBox="0 0 32 64">
<rect x="9.5" y="20" width="12" height="22" fill="#1a3a70" fill-opacity="0.18"/>
<circle cx="15.5" cy="16" r="4.8" fill="#2a3a58" stroke="#fff" stroke-width="2.2"/>
<circle cx="15.5" cy="32.5" r="4.8" fill="none" stroke="#fff" stroke-width="2.2"/>
<circle cx="15.5" cy="49" r="4.8" fill="none" stroke="#fff" stroke-width="2.2"/>
</svg>
<svg style="position:absolute;left:1540px;top:20px;" width="80" height="64" viewBox="0 0 80 64">
<defs><linearGradient id="gi" x1="0" y1="0" x2="0" y2="1"><stop offset="0" stop-color="#1e3f78" stop-opacity="0.26"/><stop offset="1" stop-color="#1e3f78" stop-opacity="0.04"/></linearGradient></defs><circle cx="27.5" cy="32.4" r="21" fill="url(#gi)"/>
<path d="M5.6 33.4 A21.4 21.4 0 0 1 49.2 33.4" fill="none" stroke="#fff" stroke-width="2.2"/>
<path d="M10.8 45.5 A21.4 21.4 0 0 0 44.5 46.5" fill="none" stroke="#fff" stroke-width="2.2"/>
<rect x="24.7" y="29.5" width="6" height="17.3" rx="3" fill="#fff"/>
<circle cx="27.3" cy="21.6" r="3.8" fill="#2a3a58" stroke="#fff" stroke-width="2"/>
<rect x="28" y="4" width="45" height="23" fill="#0a7ef8"/>
</svg>
<svg style="position:absolute;left:1570px;top:24px;" width="42" height="22" viewBox="0 0 42 22"><path d="M5 5.8 L7.8 3.1 L10 3.1 L10 17.7 L7.2 17.7 L7.2 6.9 L5 7.9 Z" fill="#fff"/><ellipse cx="19.5" cy="10.4" rx="3.55" ry="5.95" fill="none" stroke="#fff" stroke-width="2.7"/><rect x="26" y="9.6" width="10" height="2.6" fill="#fff"/><rect x="29.7" y="5.7" width="2.6" height="10.3" fill="#fff"/></svg>
<svg style="position:absolute;left:1625px;top:22px;" width="65" height="60" viewBox="0 0 65 60">
<defs><linearGradient id="gg" x1="0" y1="0" x2="0" y2="1"><stop offset="0" stop-color="#1e3f78" stop-opacity="0.26"/><stop offset="1" stop-color="#1e3f78" stop-opacity="0.04"/></linearGradient></defs><circle cx="32.5" cy="30.5" r="21" fill="url(#gg)"/>
<path d="M11.4 30.5 A21.1 21.1 0 0 1 53.6 30.5" fill="none" stroke="#fff" stroke-width="2.3"/>
<path d="M16.3 43.6 A21.1 21.1 0 0 0 48.7 43.6" fill="none" stroke="#fff" stroke-width="2.3"/>
<g fill="#fff"><circle cx="20.5" cy="31.8" r="1.6"/><circle cx="21.2" cy="24.5" r="1.6"/><circle cx="25.8" cy="19.2" r="1.6"/><circle cx="32.8" cy="17" r="1.6"/><circle cx="39.8" cy="19.2" r="1.6"/><circle cx="45.3" cy="32" r="1.6"/></g>
<path d="M30.5 28 L44.8 25 Q45.8 26.5 44.5 27.3 L35 34 Z" fill="#fff"/>
<circle cx="32.8" cy="31" r="4.6" fill="#fff"/>
<circle cx="32.8" cy="31" r="1.3" fill="#1a2e50"/>
</svg>
<svg style="position:absolute;left:1773px;top:23px;" width="60" height="60" viewBox="0 0 60 60">
<defs><linearGradient id="cg" x1="0" y1="0" x2="0" y2="1"><stop offset="0" stop-color="#72a0dc"/><stop offset="1" stop-color="#466fae"/></linearGradient></defs>
<rect x="0" y="0" width="60" height="60" rx="22" fill="url(#cg)"/>
<path d="M20.5 41.3 C15 41.3 12.3 37.8 12.3 34 C12.3 30 15 27.3 18.6 27 C19.8 21.5 23.8 17.8 29 17.8 C34 17.8 38 21 39.3 26 C44 26.3 47.6 29.8 47.6 34.3 C47.6 38.5 44.5 41.3 40.8 41.3 L28.5 41.3 C24.7 41.3 22 38.3 22 34.5 C22 30.8 24.8 28 28.5 28 C31 28 33 29.2 34.2 31" fill="none" stroke="#e6edf7" stroke-width="3.8" stroke-linecap="butt"/>
</svg>
<svg style="position:absolute;left:1855px;top:60px;" width="65" height="30" viewBox="0 0 65 30">
<path d="M1 30 L20 0 L60 0 L60 30 Z" fill="#aac4ea"/>
<g stroke="#6e7a88" stroke-width="3" fill="none"><path d="M48.5 4 L38 14.5"/><path d="M37.5 6 L37.5 14 L47 14"/><path d="M26 26 L35.5 16.5"/><path d="M36 25 L36 17 L27 17"/></g>
</svg>
<svg style="position:absolute;left:170px;top:30px;" width="60" height="60" viewBox="0 0 60 60">
<defs><linearGradient id="tib" x1="0" y1="0" x2="1" y2="1"><stop offset="0" stop-color="#d8e6ee"/><stop offset="0.45" stop-color="#fbfdfe"/><stop offset="1" stop-color="#c2d0da"/></linearGradient>
<linearGradient id="c1" x1="0" y1="0" x2="1" y2="0"><stop offset="0" stop-color="#2a7af8"/><stop offset="1" stop-color="#5aa6fa"/></linearGradient></defs>
<rect x="9.5" y="8.3" width="44" height="44.5" rx="9" fill="url(#tib)"/>
<path d="M16.4 17.8 L16.4 29 L35 29 L35 17.8 Z" fill="url(#c1)"/>
<ellipse cx="25.7" cy="17.8" rx="9.3" ry="3.6" fill="#5aa6fa"/>
<ellipse cx="25.7" cy="17.8" rx="7.6" ry="2.3" fill="#e8f2fb"/>
<path d="M17.5 22.5 Q25.7 26 34 22.5" stroke="#cfe3fb" stroke-width="1.2" fill="none"/>
<path d="M17.5 26 Q25.7 29.5 34 26" stroke="#cfe3fb" stroke-width="1.2" fill="none"/>
<path d="M35 21 L47 28 L35 30 Z" fill="#9cc0f8" fill-opacity="0.6"/>
<path d="M31 29.5 L31 42 Q40 47 49 42 L49 29.5 Z" fill="#3a82ee"/>
<ellipse cx="40" cy="29.5" rx="9" ry="3.8" fill="#2a52d8"/>
<path d="M36 35 Q42.5 37.5 49 34.8 M36 39 Q42.5 41.5 49 38.8" stroke="#d8e8fb" stroke-width="1.1" fill="none"/>
<path d="M14.3 33 Q14.3 30.5 16.8 30.5 L20 30.5 L21.5 32 L34 32 Q36.3 32 36.3 34.3 L36.3 44.3 Q36.3 46.6 34 46.6 L16.6 46.6 Q14.3 46.6 14.3 44.3 Z" fill="#1a5eb0" stroke="#fff" stroke-width="1.3"/>
<rect x="18.6" y="35.5" width="1.6" height="7" fill="#fff"/>
<circle cx="27.3" cy="38.9" r="3" fill="none" stroke="#fff" stroke-width="1.7"/>
</svg>
<svg style="position:absolute;left:378px;top:49px;" width="22" height="22" viewBox="0 0 22 22"><path d="M3.5 3.5 L18.5 18.5 M18.5 3.5 L3.5 18.5" stroke="#1a1a1a" stroke-width="3.2" stroke-linecap="butt"/></svg>
<svg style="position:absolute;left:36px;top:106px;" width="54" height="54" viewBox="0 0 54 54">
<defs><linearGradient id="a1" x1="0" y1="0" x2="1" y2="0"><stop offset="0" stop-color="#1060f8"/><stop offset="1" stop-color="#4a9efa"/></linearGradient>
<linearGradient id="a2" x1="0" y1="0" x2="0" y2="1"><stop offset="0" stop-color="#2a50d8"/><stop offset="1" stop-color="#4aa0f8"/></linearGradient></defs>
<path d="M6.5 10.5 L6.5 26.5 L33 26.5 L33 10.5 Z" fill="url(#a1)"/>
<ellipse cx="19.75" cy="10.5" rx="13.25" ry="5.2" fill="#4a9afa"/>
<ellipse cx="19.75" cy="11.2" rx="10.8" ry="3.6" fill="#fff"/>
<path d="M8.5 18 Q19.75 23 32 18 M8.5 22.5 Q19.75 27.5 32 22.5" stroke="#cde2fd" stroke-width="1.6" fill="none"/>
<path d="M33 12 L46 19 L33 22 Z" fill="#b8d2fb" fill-opacity="0.6"/>
<path d="M23 21 L23 43 Q35 49 47 43 L47 21 Z" fill="url(#a2)"/>
<ellipse cx="35" cy="21" rx="12" ry="4.6" fill="#2a50d8"/>
<path d="M36 29.5 Q41.5 31 47 28.5 M36 35.3 Q41.5 36.8 47 34.3 M36 41 Q41.5 42.5 47 40" stroke="#e0ecfd" stroke-width="1.5" fill="none"/>
<path d="M7 29.5 Q7 26.5 10 26.5 L15 26.5 L17.5 28.7 L31.5 28.7 Q34.5 28.7 34.5 31.7 L34.5 47.5 L7 47.5 Z" fill="#1062b8" stroke="#fff" stroke-width="1.6"/>
<rect x="12.2" y="32" width="1.9" height="12" fill="#fff"/>
<circle cx="23.8" cy="38" r="4.6" fill="none" stroke="#fff" stroke-width="2.1"/>
</svg>
<div style="position:absolute;left:1350px;top:116px;width:324px;height:39px;box-sizing:border-box;border:1.6px solid #2a2a2a;border-radius:11px;background:#fff;"></div>
<svg style="position:absolute;left:1360px;top:118px;" width="40" height="34" viewBox="0 0 40 34">
<path d="M7.2 7 L33 7 L33.8 24 L4.9 24 Z" fill="#b1bfc9"/>
<path d="M10 12 L30 12 L31 21 L9 21 Z" fill="#d1dae1"/>
<rect x="4.9" y="24" width="28.9" height="6.5" fill="#646464"/>
<rect x="7.7" y="26" width="2.5" height="2.6" fill="#44e000"/>
<rect x="12.3" y="3.8" width="20.6" height="10.2" rx="2.5" fill="#0a4ab0"/>
</svg>
<div style="position:absolute;left:1374.3px;top:124.21px;font-size:7.2px;line-height:7.2px;color:#fff;font-weight:700;letter-spacing:-0.35px;white-space:nowrap;">RAID</div>
<div style="position:absolute;left:1404.5px;top:124.70px;font-size:21.5px;line-height:21.5px;color:#2a2a2a;font-weight:400;letter-spacing:-0.59px;white-space:nowrap;-webkit-text-stroke:0.2px currentColor;">External Storage Devices</div>
<svg style="position:absolute;left:1649px;top:131px;" width="13" height="9" viewBox="0 0 13 9"><path d="M0 0 L12.5 0 L6.25 9 Z" fill="#444"/></svg>
<div style="position:absolute;left:1689.5px;top:120px;width:1.2px;height:30px;background:#b4ad9c;"></div>
<div style="position:absolute;left:1818px;top:120px;width:1.2px;height:30px;background:#b4ad9c;"></div>
<svg style="position:absolute;left:1705px;top:110px;" width="50" height="50" viewBox="0 0 50 50">
<path d="M26.5 14 L27.8 20.5 L32.5 24.5 L26.5 26.5 L23.5 34.5 L19.8 28.5 L12.8 28.5 L16.5 22.5 L14.5 16.5 L21 18.5 Z" fill="none" stroke="#222" stroke-width="2.7" stroke-linejoin="round"/>
<path d="M28.5 29.5 L40 40.5" stroke="#222" stroke-width="2.5"/>
<g fill="#222"><circle cx="36" cy="16" r="1.1"/><circle cx="40" cy="20.5" r="1.1"/><circle cx="39" cy="28" r="1.1"/><circle cx="16.5" cy="37" r="1.1"/><circle cx="22.5" cy="40" r="1.1"/><circle cx="31" cy="40.8" r="1.1"/></g>
</svg>
<svg style="position:absolute;left:1755px;top:108px;" width="40" height="44" viewBox="0 0 40 44">
<circle cx="23.8" cy="29" r="13.8" fill="none" stroke="#222" stroke-width="2.6"/>
<path d="M19.2 24.6 Q19.2 20.2 23.8 20.2 Q28.4 20.2 28.4 24.4 Q28.4 26.8 25.8 28.3 Q23.8 29.5 23.8 32" fill="none" stroke="#222" stroke-width="3.1"/>
<rect x="22.1" y="34" width="3.4" height="3.3" fill="#222"/>
</svg>
<svg style="position:absolute;left:1830px;top:110px;" width="50" height="50" viewBox="0 0 50 50"><path d="M28.07 10.98 L31.33 10.98 L33.30 15.63 L35.55 16.56 L40.23 14.67 L42.53 16.97 L40.64 21.65 L41.57 23.90 L46.22 25.87 L46.22 29.13 L41.57 31.10 L40.64 33.35 L42.53 38.03 L40.23 40.33 L35.55 38.44 L33.30 39.37 L31.33 44.02 L28.07 44.02 L26.10 39.37 L23.85 38.44 L19.17 40.33 L16.87 38.03 L18.76 33.35 L17.83 31.10 L13.18 29.13 L13.18 25.87 L17.83 23.90 L18.76 21.65 L16.87 16.97 L19.17 14.67 L23.85 16.56 L26.10 15.63 Z" fill="none" stroke="#222" stroke-width="3" stroke-linejoin="round"/><circle cx="29.7" cy="27.5" r="5.3" fill="none" stroke="#222" stroke-width="2.4"/></svg>
<svg style="position:absolute;left:26px;top:198px;" width="44" height="44" viewBox="0 0 44 44">
<g fill="none" stroke="#e6eaf6" stroke-width="1.7"><circle cx="21.8" cy="22.8" r="14.1"/></g>
<g fill="#e6eaf6"><circle cx="12.8" cy="21.6" r="1.5"/><circle cx="16" cy="16.2" r="1.3"/><circle cx="21.8" cy="14" r="1.4"/><circle cx="28.2" cy="16.2" r="1.3"/><circle cx="31" cy="21.6" r="1.5"/></g>
<path d="M21.5 24.5 L27.5 19" stroke="#e6eaf6" stroke-width="1.6"/>
<circle cx="21.6" cy="24.4" r="2" fill="#e6eaf6"/>
</svg>
<svg style="position:absolute;left:26px;top:246px;" width="44" height="40" viewBox="0 0 44 40">
<g fill="none" stroke="#e6eaf6" stroke-width="1.6">
<ellipse cx="21.8" cy="11.4" rx="13" ry="4.6"/>
<path d="M8.8 11.4 L8.8 29.3 A13 4.2 0 0 0 34.8 29.3 L34.8 11.4"/>
<path d="M8.8 13 A13 4.2 0 0 0 34.8 13"/>
<path d="M8.8 17.8 A13 4.2 0 0 0 34.8 17.8"/>
<path d="M8.8 22 A13 4.2 0 0 0 34.8 22"/>
</g></svg>
<svg style="position:absolute;left:309px;top:260.5px;" width="22" height="13" viewBox="0 0 22 13"><path d="M1.5 11.5 L10.5 1.8 L19.5 11.5" fill="none" stroke="#a8b4e0" stroke-width="1.6"/></svg>
<svg style="position:absolute;left:309px;top:584px;" width="22" height="13" viewBox="0 0 22 13"><path d="M1.5 11.5 L10.5 1.8 L19.5 11.5" fill="none" stroke="#a8b4e0" stroke-width="1.6"/></svg>
<svg style="position:absolute;left:26px;top:570px;" width="44" height="40" viewBox="0 0 44 40">
<g fill="none" stroke="#e6eaf6" stroke-width="1.6">
<path d="M8 10 Q8 8.3 9.8 8.3 L18 8.3 L20 10.4 L35.3 10.4 Q36.7 10.4 36.7 11.8 L36.7 30 Q36.7 31.5 35.3 31.5 L9.4 31.5 Q8 31.5 8 30 Z"/>
<path d="M13.7 14 L13.7 27.4"/>
<circle cx="25.6" cy="20.7" r="5.6"/>
</g>
<circle cx="25.6" cy="20.7" r="2.4" fill="#e6eaf6"/>
</svg>
<svg style="position:absolute;left:26px;top:785px;" width="44" height="40" viewBox="0 0 44 40">
<g fill="none" stroke="#e6eaf6" stroke-width="1.7">
<path d="M21 6.5 L9 19 L21 31.5"/>
<path d="M21 6.5 L26 11.5"/><path d="M21 31.5 L26 26.5"/>
<path d="M25 19 L35.7 19"/>
</g></svg>
<svg style="position:absolute;left:26px;top:830px;" width="44" height="40" viewBox="0 0 44 40">
<path d="M12 29.6 C8.5 29.6 7.3 27 7.3 25 C7.3 22.3 9.3 20.5 11.8 20.3 C12.8 15.3 16.5 12.3 21 12.3 C25 12.3 28 14.5 29.5 17.8 C33.7 18 37 21 37 25 C37 27.8 35 29.6 32 29.6 Z" fill="none" stroke="#e6eaf6" stroke-width="1.7"/>
<path d="M17 29.8 L32 14.5" stroke="#e6eaf6" stroke-width="3"/>
<path d="M26 12.5 L35.5 10.5 L33.5 20 Z" fill="#e6eaf6"/>
</svg>
<svg style="position:absolute;left:26px;top:877px;" width="44" height="34" viewBox="0 0 44 34">
<g fill="none" stroke="#e6eaf6" stroke-width="1.6">
<path d="M10 5.5 L34 5.5 L36.5 22 L7.5 22 Z"/>
<rect x="7.5" y="22" width="29" height="6.5" rx="1.5"/>
</g>
<text x="22" y="18.5" font-family="Liberation Sans" font-weight="700" font-size="9" fill="#e6eaf6" text-anchor="middle" letter-spacing="0.3">SSD</text>
</svg>
<svg style="position:absolute;left:26px;top:922px;" width="44" height="34" viewBox="0 0 44 34">
<g fill="none" stroke="#e6eaf6" stroke-width="1.6">
<path d="M10 9 L8 22 M34 9 L36.5 22"/>
<rect x="7.5" y="22" width="29" height="6.5" rx="1.5"/>
<path d="M19 6.5 L19 19 M15.5 10 L19 6 L22.5 10"/>
<path d="M25 6.5 L25 19 M21.5 15.5 L25 19.5 L28.5 15.5"/>
</g>
<rect x="11" y="24.5" width="2" height="2" fill="#e6eaf6"/><rect x="15" y="24.5" width="2" height="2" fill="#e6eaf6"/>
</svg>
<svg style="position:absolute;left:300px;top:785px;" width="40" height="40" viewBox="0 0 40 40">
<g fill="none" stroke="#e6eaf6" stroke-width="1.8">
<path d="M18 10.7 L12 10.7 L12 28.7 L29.6 28.7 L29.6 22.2"/>
<path d="M23 10.7 L29.6 10.7 L29.6 17"/>
<path d="M18.1 22.2 L28 12.3"/>
</g>
<path d="M23.5 10 L30.3 10 L30.3 16.8 Z" fill="#e6eaf6"/>
</svg>
<svg style="position:absolute;left:300px;top:830px;" width="40" height="40" viewBox="0 0 40 40">
<g fill="none" stroke="#e6eaf6" stroke-width="1.8">
<path d="M18 10.7 L12 10.7 L12 28.7 L29.6 28.7 L29.6 22.2"/>
<path d="M23 10.7 L29.6 10.7 L29.6 17"/>
<path d="M18.1 22.2 L28 12.3"/>
</g>
<path d="M23.5 10 L30.3 10 L30.3 16.8 Z" fill="#e6eaf6"/>
</svg>
<svg style="position:absolute;left:300px;top:875px;" width="40" height="40" viewBox="0 0 40 40">
<g fill="none" stroke="#e6eaf6" stroke-width="1.8">
<path d="M18 10.7 L12 10.7 L12 28.7 L29.6 28.7 L29.6 22.2"/>
<path d="M23 10.7 L29.6 10.7 L29.6 17"/>
<path d="M18.1 22.2 L28 12.3"/>
</g>
<path d="M23.5 10 L30.3 10 L30.3 16.8 Z" fill="#e6eaf6"/>
</svg>
<svg style="position:absolute;left:300px;top:920px;" width="40" height="40" viewBox="0 0 40 40">
<g fill="none" stroke="#e6eaf6" stroke-width="1.8">
<path d="M18 10.7 L12 10.7 L12 28.7 L29.6 28.7 L29.6 22.2"/>
<path d="M23 10.7 L29.6 10.7 L29.6 17"/>
<path d="M18.1 22.2 L28 12.3"/>
</g>
<path d="M23.5 10 L30.3 10 L30.3 16.8 Z" fill="#e6eaf6"/>
</svg>
<svg style="position:absolute;left:399px;top:249px;" width="21" height="21" viewBox="0 0 21 21"><circle cx="10.5" cy="10.5" r="10.5" fill="#3dbb3a"/><path d="M5.67 10.92 L9.03 14.07 L15.33 7.77" fill="none" stroke="#fff" stroke-width="2.9400000000000004" stroke-linecap="round" stroke-linejoin="round"/></svg>
<svg style="position:absolute;left:565px;top:754px;" width="24" height="24" viewBox="0 0 24 24"><defs><linearGradient id="gc565754" x1="0" y1="0" x2="0" y2="1"><stop offset="0" stop-color="#8cc84e"/><stop offset="1" stop-color="#4fa32c"/></linearGradient></defs><circle cx="12.0" cy="12.0" r="12.0" fill="url(#gc565754)"/><path d="M5.28 12.48 L10.08 17.28 L18.72 7.199999999999999" fill="none" stroke="#fff" stroke-width="2.88"/></svg>
<svg style="position:absolute;left:565px;top:796px;" width="24" height="24" viewBox="0 0 24 24"><defs><linearGradient id="gc565796" x1="0" y1="0" x2="0" y2="1"><stop offset="0" stop-color="#8cc84e"/><stop offset="1" stop-color="#4fa32c"/></linearGradient></defs><circle cx="12.0" cy="12.0" r="12.0" fill="url(#gc565796)"/><path d="M5.28 12.48 L10.08 17.28 L18.72 7.199999999999999" fill="none" stroke="#fff" stroke-width="2.88"/></svg>
<svg style="position:absolute;left:1144px;top:757px;" width="21" height="21" viewBox="0 0 21 21"><circle cx="10.5" cy="10.5" r="10.5" fill="#3dbb3a"/><path d="M5.67 10.92 L9.03 14.07 L15.33 7.77" fill="none" stroke="#fff" stroke-width="2.9400000000000004" stroke-linecap="round" stroke-linejoin="round"/></svg>
<svg style="position:absolute;left:1476px;top:250px;" width="20" height="16" viewBox="0 0 20 16"><path d="M2.5 12.5 L10 5 L17.5 12.5" fill="none" stroke="#333" stroke-width="2.2"/></svg>
<svg style="position:absolute;left:403px;top:798px;" width="18" height="22" viewBox="0 0 18 22"><path d="M7.5 2 L14.5 2 L10.8 8.6 L15.5 8.6 L5 20 L8.3 11.2 L3.5 11.2 Z" fill="#f4b400"/></svg>
</body></html>
